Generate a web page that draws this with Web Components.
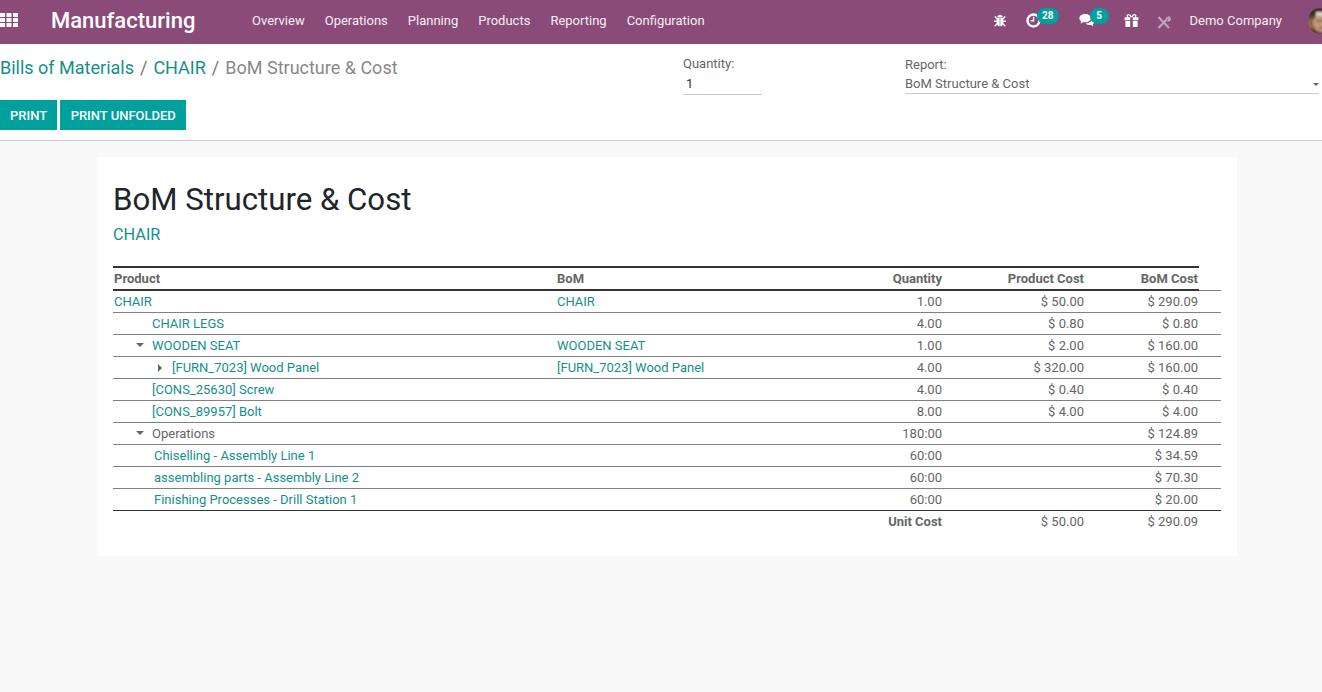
<!DOCTYPE html>
<html>
<head>
<meta charset="utf-8">
<title>BoM Structure & Cost</title>
<style>
  html, body { margin: 0; height: 100%; overflow: hidden; }
  body { font-family: Roboto, "Noto Sans", sans-serif; font-size: 13px; background: #f9f9f9; color: #666; }
  a { text-decoration: none; }
</style>
</head>
<body>

<app-navbar title-text="Manufacturing">
  <span slot="menu">Overview</span>
  <span slot="menu">Operations</span>
  <span slot="menu">Planning</span>
  <span slot="menu">Products</span>
  <span slot="menu">Reporting</span>
  <span slot="menu">Configuration</span>
</app-navbar>

<control-panel></control-panel>

<bom-report heading="BoM Structure &amp; Cost" product="CHAIR">
  <bom-row kind="head"><span slot="product">Product</span><span slot="bom">BoM</span><span slot="qty">Quantity</span><span slot="cost">Product Cost</span><span slot="total">BoM Cost</span></bom-row>
  <bom-row first><a slot="product">CHAIR</a><a slot="bom">CHAIR</a><span slot="qty">1.00</span><span slot="cost">$ 50.00</span><span slot="total">$ 290.09</span></bom-row>
  <bom-row indent="39"><a slot="product">CHAIR LEGS</a><span slot="qty">4.00</span><span slot="cost">$ 0.80</span><span slot="total">$ 0.80</span></bom-row>
  <bom-row indent="39" caret="down"><a slot="product">WOODEN SEAT</a><a slot="bom">WOODEN SEAT</a><span slot="qty">1.00</span><span slot="cost">$ 2.00</span><span slot="total">$ 160.00</span></bom-row>
  <bom-row indent="59" caret="right"><a slot="product">[FURN_7023] Wood Panel</a><a slot="bom">[FURN_7023] Wood Panel</a><span slot="qty">4.00</span><span slot="cost">$ 320.00</span><span slot="total">$ 160.00</span></bom-row>
  <bom-row indent="39"><a slot="product">[CONS_25630] Screw</a><span slot="qty">4.00</span><span slot="cost">$ 0.40</span><span slot="total">$ 0.40</span></bom-row>
  <bom-row indent="39"><a slot="product">[CONS_89957] Bolt</a><span slot="qty">8.00</span><span slot="cost">$ 4.00</span><span slot="total">$ 4.00</span></bom-row>
  <bom-row indent="39" caret="down"><span slot="product">Operations</span><span slot="qty">180:00</span><span slot="total">$ 124.89</span></bom-row>
  <bom-row indent="41"><a slot="product">Chiselling - Assembly Line 1</a><span slot="qty">60:00</span><span slot="total">$ 34.59</span></bom-row>
  <bom-row indent="41"><a slot="product">assembling parts - Assembly Line 2</a><span slot="qty">60:00</span><span slot="total">$ 70.30</span></bom-row>
  <bom-row indent="41" kind="last"><a slot="product">Finishing Processes - Drill Station 1</a><span slot="qty">60:00</span><span slot="total">$ 20.00</span></bom-row>
  <bom-row kind="foot"><b slot="qty">Unit Cost</b><span slot="cost">$ 50.00</span><span slot="total">$ 290.09</span></bom-row>
</bom-report>

<script>
// navbar
const navTemplate = document.createElement('template');
navTemplate.innerHTML = `
  <style>
    :host { display: flex; align-items: center; height: 44px; padding-bottom: 4px; background: #8a4b78; color: #fff; overflow: hidden; box-sizing: border-box; }
    .apps { width: 18px; height: 14px; flex: none; }
    .brand { font-size: 22px; font-weight: 500; margin-left: 33px; width: 191px; flex: none; }
    .menu { display: flex; flex: none; }
    ::slotted([slot=menu]) { padding: 0 10px; color: #f6eef3; }
    .right { margin-left: auto; display: flex; align-items: center; flex: none; margin-right: -10px; }
    .company { margin-left: 19px; color: #f6eef3; }
    .avatar { margin-left: 26px; width: 24px; height: 26px; display: block; margin-top: 1px; }
    nav-icon { color: #fff; }
  </style>
  <svg class="apps" viewBox="0 0 18 14" fill="#fff">
    <rect x="0" y="0" width="5" height="4"/><rect x="6.5" y="0" width="5" height="4"/><rect x="13" y="0" width="5" height="4"/>
    <rect x="0" y="5" width="5" height="4"/><rect x="6.5" y="5" width="5" height="4"/><rect x="13" y="5" width="5" height="4"/>
    <rect x="0" y="10" width="5" height="4"/><rect x="6.5" y="10" width="5" height="4"/><rect x="13" y="10" width="5" height="4"/>
  </svg>
  <div class="brand"></div>
  <div class="menu"><slot name="menu"></slot></div>
  <div class="right">
    <nav-icon size="12">
      <svg width="12" height="13" viewBox="0 0 12 13" fill="currentColor">
        <path d="M3.300 3.400C3.400 1.700 4.500 .8 6 .8s2.600.9 2.700 2.600z"/>
        <path d="M2.600 4.100h3.100V12.400C3.800 12 2.600 10.400 2.600 8.400zM6.300 4.100h3.100v4.300c0 2-1.200 3.600-3.100 4z"/>
        <path d="M0.800 2.400l2.200 2.200M11.200 2.400L9 4.600M0 7.200h2.900M12 7.200H9.100M0.700 12.200l2.400-2.400M11.300 12.200l-2.400-2.400" stroke="currentColor" stroke-width="1.400" fill="none"/>
      </svg>
    </nav-icon>
    <nav-icon size="15" count="28" style="margin-left:20px">
      <svg width="15" height="15" viewBox="0 0 15 15" fill="none" stroke="currentColor">
        <circle cx="7.500" cy="7.500" r="6" stroke-width="2.400"/>
        <path d="M7.600 3.800v4H4.600" stroke-width="1.400"/>
      </svg>
    </nav-icon>
    <nav-icon size="16" count="5" style="margin-left:38px">
      <svg width="16" height="14" viewBox="0 0 16 14" fill="currentColor">
        <path d="M6.200 1C2.900 1 .4 2.900.4 5.200c0 1.300.8 2.500 2 3.300-.2.8-.6 1.400-1.100 2 1.100-.2 2.200-.8 3-1.500.6.1 1.200.2 1.900.2 3.300 0 5.800-1.800 5.800-4S9.500 1 6.200 1z"/>
        <path d="M13.300 5.600c0 2.900-3 4.800-6.500 4.900.9 1 2.400 1.500 3.900 1.500.5 0 1 0 1.400-.1.6.6 1.400 1 2.300 1.200-.4-.5-.7-1-.8-1.600 1-.7 1.600-1.700 1.600-2.700 0-1.300-.7-2.400-1.900-3.200z"/>
      </svg>
    </nav-icon>
    <nav-icon size="14" style="margin-left:29px">
      <svg width="15" height="13" viewBox="0 0 15 13" fill="currentColor">
        <path d="M4.600 0C3.400 0 2.600.8 2.600 1.800c0 .6.2 1 .5 1.400H.6v3h5.600V3.200h2.600v3h5.600v-3h-2.500c.3-.4.5-.8.5-1.400C12.400.8 11.600 0 10.400 0 9 0 8 1 7.500 2.400 7 1 6 0 4.600 0zm0 1.300c.8 0 1.400 1 1.600 1.900H4.600c-.5 0-.8-.4-.8-.9s.3-1 .8-1zm5.800 0c.5 0 .8.5.8 1s-.3.9-.8.9H8.800c.2-.9.8-1.900 1.600-1.900z"/>
        <path d="M1.400 7h4.800v6H1.400zM8.800 7h4.800v6H8.800z"/>
      </svg>
    </nav-icon>
    <nav-icon size="14" style="margin-left:19px;opacity:.5;margin-top:4px">
      <svg width="14" height="13" viewBox="0 0 14 13" fill="none" stroke="currentColor" stroke-width="2">
        <path d="M1.500 12L10 3.200"/>
        <path d="M9 3.500c.1-1.500 1.600-2.700 3.400-2.400L10.900 2.700l.8 1 1.600-1.200C13.600 4.200 12 5.400 10.400 5" stroke-width="1.200"/>
        <path d="M1.500 1l10.500 11" />
      </svg>
    </nav-icon>
    <span class="company">Demo Company</span>
    <svg class="avatar" viewBox="0 0 24 26">
      <defs>
        <clipPath id="face"><ellipse cx="12" cy="13" rx="12" ry="13"/></clipPath>
        <filter id="soft" x="-10%" y="-10%" width="120%" height="120%"><feGaussianBlur stdDeviation="0.9"/></filter>
      </defs>
      <g clip-path="url(#face)">
        <g filter="url(#soft)">
          <rect width="24" height="26" fill="#5e4030"/>
          <rect x="0" y="0" width="24" height="7" fill="#3a2a24"/>
          <ellipse cx="13" cy="15" rx="8" ry="9" fill="#c39a78"/>
          <rect x="8" y="4" width="9" height="4" fill="#d9d2c6"/>
          <rect x="8" y="12" width="10" height="1.500" fill="#7a5440"/>
          <rect x="10" y="19" width="6" height="1.500" fill="#8c5a42"/>
          <rect x="0" y="11" width="5" height="10" fill="#8a6a48"/>
        </g>
      </g>
    </svg>
  </div>
`;
class AppNavbar extends HTMLElement {
  constructor() {
    super();
    this.attachShadow({ mode: 'open' });
    this.shadowRoot.appendChild(navTemplate.content.cloneNode(true));
    this.shadowRoot.querySelector('.brand').textContent = this.getAttribute('title-text');
  }
}

// icon in the systray, with optional counter on top
class NavIcon extends HTMLElement {
  constructor() {
    super();
    const root = this.attachShadow({ mode: 'open' });
    const count = this.getAttribute('count');
    root.innerHTML = `
      <style>
        :host { display: block; position: relative; line-height: 0; flex: none; width: ${this.getAttribute('size')}px; }
        .badge { position: absolute; left: 11px; top: -5px; height: 16px; min-width: 19px; box-sizing: border-box; padding: 0 5.5px; border-radius: 8px; background: #00a09d; color: #fff; font: 700 10px/16px Roboto, sans-serif; text-align: center; }
      </style>
      <slot></slot>
      ${count ? `<span class="badge">${count}</span>` : ''}
    `;
  }
}

// breadcrumbs, buttons and the two report options
const panelTemplate = document.createElement('template');
panelTemplate.innerHTML = `
  <style>
    :host { display: flex; height: 97px; box-sizing: border-box; background: #fff; border-bottom: 1px solid #ccc; }
    .left { width: 683px; flex: none; }
    .crumbs { font-size: 18px; line-height: 24px; margin-top: 12px; color: #888; white-space: nowrap; }
    .crumbs a { color: #158f8c; }
    .crumbs i { font-style: normal; margin: 0 6px; color: #777; }
    .buttons { display: flex; gap: 3px; margin-top: 20px; }
    button { height: 30px; border: 0; padding: 0 10px; background: #00a09d; color: #fff; font: 500 13px Roboto, sans-serif; }
    button + button { padding: 0 10.5px; }
    .field { margin-top: 12px; color: #666; }
    .field label { display: block; line-height: 16px; }
    .qty { width: 79px; margin-right: 143px; flex: none; }
    .qty div { margin-top: 3px; height: 20px; line-height: 18px; padding-left: 3px; border-bottom: 1px solid #ccc; color: #333; box-sizing: border-box; font-size: 13px; }
    .report { width: 414px; flex: none; margin-top: 13px; }
    .report div { margin-top: 2px; height: 19px; line-height: 18px; border-bottom: 1px solid #ccc; box-sizing: border-box; position: relative; }
    .report div::after { content: ''; position: absolute; right: 0; top: 8px; border: 3.5px solid transparent; border-top-color: #666; border-bottom: 0; }
  </style>
  <div class="left">
    <div class="crumbs"><a>Bills of Materials</a><i>/</i><a>CHAIR</a><i>/</i>BoM Structure &amp; Cost</div>
    <div class="buttons"><button>PRINT</button><button>PRINT UNFOLDED</button></div>
  </div>
  <div class="field qty"><label>Quantity:</label><div>1</div></div>
  <div class="field report"><label>Report:</label><div>BoM Structure &amp; Cost</div></div>
`;
class ControlPanel extends HTMLElement {
  constructor() {
    super();
    this.attachShadow({ mode: 'open' });
    this.shadowRoot.appendChild(panelTemplate.content.cloneNode(true));
  }
}

// the white sheet
const reportTemplate = document.createElement('template');
reportTemplate.innerHTML = `
  <style>
    :host { display: block; width: 1140px; height: 399px; margin: 16px 0 0 97px; padding: 16px; box-sizing: border-box; background: #fff; }
    h1 { margin: 8px 0 0; font-size: 31.2px; font-weight: 400; line-height: 38px; color: #212529; }
    h2 { margin: 4px 0 0; font-size: 16.25px; font-weight: 400; line-height: 24px; color: #158f8c; }
    .table { margin-top: 19px; }
  </style>
  <h1></h1>
  <h2></h2>
  <div class="table"><slot></slot></div>
`;
class BomReport extends HTMLElement {
  constructor() {
    super();
    this.attachShadow({ mode: 'open' });
    this.shadowRoot.appendChild(reportTemplate.content.cloneNode(true));
    this.shadowRoot.querySelector('h1').textContent = this.getAttribute('heading');
    this.shadowRoot.querySelector('h2').textContent = this.getAttribute('product');
  }
}

// one line of the table
const rowTemplate = document.createElement('template');
rowTemplate.innerHTML = `
  <style>
    :host { display: grid; grid-template-columns: 443px 250px 137px 142px 114px; width: 1108px; height: 22px; line-height: 21px; box-sizing: border-box; border-bottom: 1px solid #808080; color: #666; white-space: nowrap; }
    :host([kind=head]) { position: relative; z-index: 1; width: 1086px; height: 25px; border-top: 2px solid #333; border-bottom: 2px solid #333; font-weight: 700; line-height: 22px; }
    :host([kind=last]) { border-bottom-color: #333; }
    :host([kind=foot]) { border-bottom: 0; }
    :host([first]) { height: 23px; margin-top: -1px; border-top: 1px solid #808080; }
    .product { position: relative; padding-left: 1px; }
    .bom { padding-left: 1px; }
    .qty, .cost, .total { text-align: right; padding-right: 1px; }
    ::slotted(a) { color: #158f8c; }
    .caret { position: absolute; top: 8px; width: 0; height: 0; }
    .caret.down { border: 4px solid transparent; border-top-color: #666; border-bottom: 0; margin-left: -16px; }
    .caret.right { border: 4px solid transparent; border-left-color: #666; border-right: 0; margin-top: -1px; margin-left: -14px; }
  </style>
  <div class="product"><span class="caret"></span><slot name="product"></slot></div>
  <div class="bom"><slot name="bom"></slot></div>
  <div class="qty"><slot name="qty"></slot></div>
  <div class="cost"><slot name="cost"></slot></div>
  <div class="total"><slot name="total"></slot></div>
`;
class BomRow extends HTMLElement {
  constructor() {
    super();
    this.attachShadow({ mode: 'open' });
    this.shadowRoot.appendChild(rowTemplate.content.cloneNode(true));
    const indent = this.getAttribute('indent');
    if (indent) this.shadowRoot.querySelector('.product').style.paddingLeft = indent + 'px';
    const caret = this.shadowRoot.querySelector('.caret');
    if (this.getAttribute('caret')) caret.classList.add(this.getAttribute('caret'));
    else caret.remove();
  }
}

customElements.define('nav-icon', NavIcon);
customElements.define('app-navbar', AppNavbar);
customElements.define('control-panel', ControlPanel);
customElements.define('bom-report', BomReport);
customElements.define('bom-row', BomRow);
</script>
</body>
</html>
